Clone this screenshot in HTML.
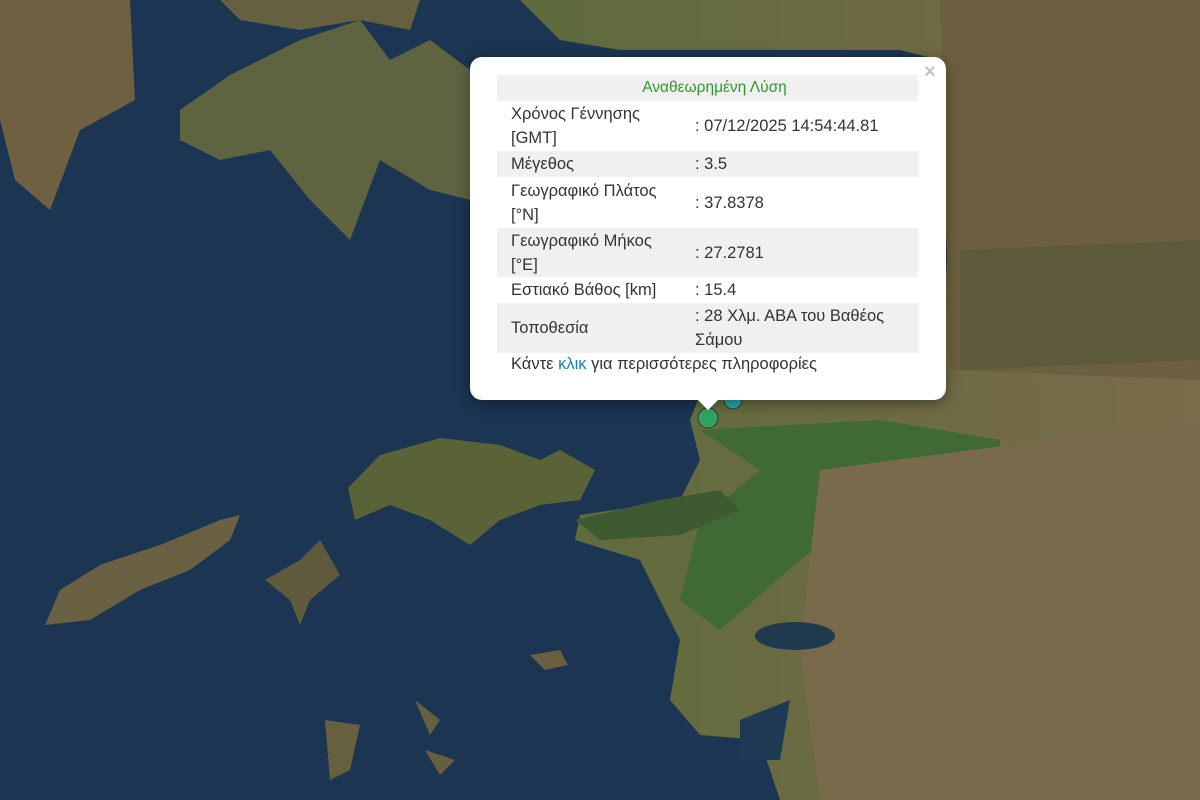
<!DOCTYPE html>
<html><head><meta charset="utf-8"><style>
body{margin:0;width:1200px;height:800px;overflow:hidden;font-family:"Liberation Sans",Arial,sans-serif}
#map{position:absolute;left:0;top:0}
.pop{position:absolute;left:470px;top:57px;width:476px;height:343px;background:#fff;border-radius:12px;box-shadow:0 3px 14px rgba(0,0,0,.4)}
.tip{position:absolute;left:696px;top:398px;width:0;height:0;border-left:12px solid transparent;border-right:12px solid transparent;border-top:12px solid #fff}
.x{position:absolute;left:924px;top:61px;color:#c3c3c3;font:bold 20px "Liberation Sans",sans-serif}
table{position:absolute;left:497px;top:75px;width:421px;border-collapse:collapse;font-size:16.5px;color:#333;line-height:24px;table-layout:fixed}
td{padding:0 0 0 14px;vertical-align:middle;white-space:nowrap}
td.v{padding-left:0;width:223px;white-space:normal}
col.a{width:198px}
tr.g{background:#f0f0f0}
.h{text-align:center;color:#2a9a2a;height:26px;font-size:15.5px}
.more{position:absolute;left:511px;top:355px;font-size:16.5px;color:#333}
.more span{color:#1b7fb0}
</style></head><body>
<svg id="map" width="1200" height="800" viewBox="0 0 1200 800">
<rect width="1200" height="800" fill="#1c3552"/>
<defs>
<linearGradient id="lg" x1="0" x2="1"><stop offset="0" stop-color="#5e6b3c"/><stop offset="1" stop-color="#7a6b4a"/></linearGradient>
</defs>
<path d="M520 0 L1200 0 L1200 800 L780 800 L760 740 L700 735 L670 700 L680 640 L660 600 L640 560 L575 540 L580 515 L680 500 L700 460 L690 420 L700 395 L760 380 L940 390 L950 200 L940 60 L900 50 L620 50 L560 40 Z" fill="url(#lg)"/>
<path d="M940 0 L1200 0 L1200 380 L950 370 L945 200 Z" fill="#6d6040"/>
<path d="M960 250 L1200 240 L1200 360 L960 370 Z" fill="#5c5a3a"/>
<path d="M700 430 L880 420 L1000 440 L1000 470 L880 500 L800 560 L720 630 L680 600 L700 520 L760 470 Z" fill="#3f6a35"/>
<path d="M820 470 L1200 420 L1200 800 L820 800 L800 650 Z" fill="#7a6a4c"/>
<path d="M575 520 L660 500 L720 490 L740 510 L680 535 L600 540 Z" fill="#3e5a30"/>
<ellipse cx="795" cy="636" rx="40" ry="14" fill="#1e3a4c"/>
<path d="M740 720 L790 700 L780 760 L740 760 Z" fill="#1e3a55"/>
<path d="M0 0 L130 0 L135 100 L80 130 L50 210 L15 180 L0 120 Z" fill="#6e6040"/>
<path d="M180 110 L230 75 L300 40 L360 20 L390 60 L430 40 L470 70 L470 200 L430 190 L380 160 L350 240 L310 200 L270 150 L220 160 L180 140 Z" fill="#5e6440"/>
<path d="M220 0 L420 0 L410 30 L360 20 L300 30 L240 20 Z" fill="#65603f"/>
<path d="M348 488 L380 455 L440 438 L500 445 L540 460 L560 450 L595 470 L580 500 L540 505 L500 520 L470 545 L430 520 L390 505 L355 520 Z" fill="#5a6238"/>
<path d="M45 625 L60 590 L100 565 L160 545 L220 520 L240 515 L230 540 L190 570 L140 590 L90 620 Z" fill="#6a6042"/>
<path d="M265 580 L300 560 L320 540 L340 575 L310 600 L300 625 L290 600 Z" fill="#5f5a3c"/>
<path d="M530 655 L560 650 L568 665 L545 670 Z" fill="#6a6040"/>
<path d="M325 720 L360 725 L350 770 L330 780 Z" fill="#66603f"/>
<path d="M415 700 L440 720 L430 735 Z M425 750 L455 760 L440 775 Z" fill="#66603f"/>
<circle cx="733" cy="400" r="9" fill="#2aa7a0" stroke="#333"/>
<circle cx="708" cy="418" r="10" fill="#2fa460" stroke="#333"/>
</svg>
<div class="pop"></div><div class="tip"></div>
<div class="x">×</div>
<table>
<colgroup><col class="a"><col></colgroup>
<tr class="g"><td colspan="2" class="h">Αναθεωρημένη Λύση</td></tr>
<tr style="height:50px"><td>Χρόνος Γέννησης<br>[GMT]</td><td class="v">: 07/12/2025 14:54:44.81</td></tr>
<tr class="g" style="height:26px"><td>Μέγεθος</td><td class="v">: 3.5</td></tr>
<tr style="height:51px"><td>Γεωγραφικό Πλάτος<br>[°N]</td><td class="v">: 37.8378</td></tr>
<tr class="g" style="height:49px"><td>Γεωγραφικό Μήκος<br>[°E]</td><td class="v">: 27.2781</td></tr>
<tr style="height:26px"><td>Εστιακό Βάθος [km]</td><td class="v">: 15.4</td></tr>
<tr class="g" style="height:50px"><td>Τοποθεσία</td><td class="v">: 28 Χλμ. ΑΒΑ του Βαθέος<br>Σάμου</td></tr>
</table>
<div class="more">Κάντε <span>κλικ</span> για περισσότερες πληροφορίες</div>
</body></html>
